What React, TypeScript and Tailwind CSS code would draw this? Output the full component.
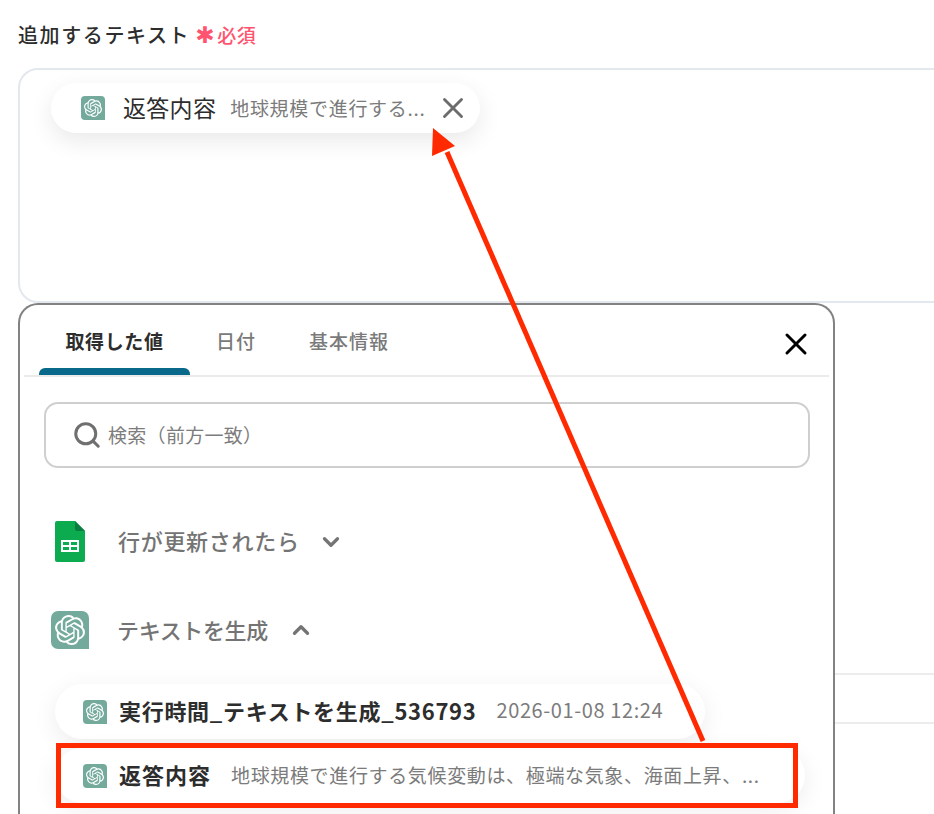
import { ChevronDown, ChevronUp, Search, X } from 'lucide-react';
import { SiOpenai } from 'react-icons/si';

const font = { fontFamily: '"Noto Sans CJK JP", "Noto Sans", sans-serif' };

function GptIcon({ size }: { size: 'sm' | 'lg' }) {
  return (
    <span
      className={
        size === 'lg'
          ? 'flex h-[38px] w-[38px] shrink-0 items-center justify-center rounded-[7px] rounded-br-none bg-[#74aa9c] text-white'
          : 'flex h-6 w-6 shrink-0 items-center justify-center rounded-[4px] rounded-br-none bg-[#74aa9c] text-white'
      }
    >
      <SiOpenai className={size === 'lg' ? 'h-[30px] w-[30px]' : 'h-[18px] w-[18px]'} />
    </span>
  );
}

function SheetsIcon() {
  return (
    <svg width="30" height="41" viewBox="0 0 30 41" className="shrink-0">
      <path d="M2 0h18l10 10v29a2 2 0 0 1-2 2H2a2 2 0 0 1-2-2V2a2 2 0 0 1 2-2z" fill="#0dab4f" />
      <path d="M20 0l10 10h-8a2 2 0 0 1-2-2z" fill="#0a7d41" />
      <path d="M6 19h18v12H6z" fill="#fff" />
      <path d="M8 21h6v3H8zM16 21h6v3h-6zM8 26h6v3H8zM16 26h6v3h-6z" fill="#0dab4f" />
    </svg>
  );
}

export default function App() {
  return (
    <div className="relative h-[814px] w-[934px] overflow-hidden bg-white text-[#2d2d2d]" style={font}>
      <div className="px-[18px] pt-[20px]">
        <div className="flex h-[30px] items-center">
          <span className="text-[20px] font-medium leading-[30px] tracking-[1.6px]">追加するテキスト</span>
          <span className="ml-[5px] flex items-center text-[19px] font-medium leading-[30px] tracking-[0.5px] text-[#ff5470]">
            <span className="mr-[5px] w-[17px] text-center font-['DejaVu_Sans'] text-[23px] leading-[30px]">✱</span>必須
          </span>
        </div>

        {/* text box */}
        <div className="mt-[18px] h-[235px] w-[1000px] rounded-[20px] border-2 border-[#e3e8ee] pl-[31px] pt-[13px]">
          <div className="flex h-[50px] w-[429px] items-center rounded-full bg-white pl-[30px] shadow-[0_8px_24px_rgba(0,0,0,0.09)]">
            <GptIcon size="sm" />
            <span className="ml-[18px] pb-[2px] text-[23px] leading-none tracking-[0.3px]">返答内容</span>
            <span className="ml-[14px] pb-[2px] text-[19px] leading-none tracking-[0.7px] text-[#7b7b7b]">地球規模で進行する...</span>
            <X className="ml-[11px] h-[34px] w-[34px] text-[#6c6c6c]" strokeWidth={2} />
          </div>
        </div>

        {/* popup */}
        <div className="relative z-10 h-[600px] w-[817px] rounded-t-[20px] border-2 border-b-0 border-[#828282] bg-white">
          <div className="mx-[4px] flex h-[72px] items-start border-b-2 border-[#ebebeb]">
            <div className="relative ml-[15px] flex h-[70px] w-[151px] justify-center pt-[21px] text-[19px] font-bold leading-[30px] tracking-[0.6px]">
              取得した値
              <div className="absolute bottom-0 left-0 h-[7px] w-full rounded-t-[6px] bg-[#08698a]" />
            </div>
            <div className="ml-[26px] pt-[21px] text-[19px] font-medium leading-[30px] tracking-[1px] text-[#7a7a7a]">日付</div>
            <div className="ml-[53px] pt-[21px] text-[19px] font-medium leading-[30px] tracking-[1px] text-[#7a7a7a]">基本情報</div>
            <X className="ml-auto mr-[15px] mt-[21px] h-[36px] w-[36px] text-black" strokeWidth={2} />
          </div>

          <div className="ml-[24px] mt-[25px] flex h-[66px] w-[766px] items-center rounded-[14px] border-2 border-[#cfcfcf] pl-[26px]">
            <Search className="h-[30px] w-[30px] text-[#6f6f6f]" strokeWidth={2.4} />
            <span className="ml-[6px] pt-px text-[19px] tracking-[0.3px] text-[#7d7d7d]">検索（前方一致）</span>
          </div>

          <div className="ml-[35px] mt-[53px] flex h-[41px] items-center">
            <SheetsIcon />
            <span className="ml-[33px] pb-[2px] text-[22px] font-medium tracking-[0.7px] text-[#747474]">行が更新されたら</span>
            <ChevronDown className="ml-[18px] h-[26px] w-[26px] text-[#747474]" strokeWidth={3} />
          </div>

          <div className="ml-[31px] mt-[49px] flex h-[38px] items-center">
            <GptIcon size="lg" />
            <span className="ml-[28px] pb-[2px] text-[22px] font-medium tracking-[-0.35px] text-[#747474]">テキストを生成</span>
            <ChevronUp className="ml-[20px] h-[26px] w-[26px] text-[#747474]" strokeWidth={3} />
          </div>

          <div className="ml-[35px] mt-[35px] flex h-[55px] w-[650px] items-center rounded-full bg-white pl-[28px] shadow-[0_6px_24px_rgba(0,0,0,0.08)]">
            <GptIcon size="sm" />
            <span className="ml-[12px] pb-[3px] text-[22px] font-bold leading-none tracking-[0.7px]">実行時間_テキストを生成_536793</span>
            <span className="ml-[20px] pb-[3px] text-[20px] leading-none tracking-[0.6px] text-[#7b7b7b]">2026-01-08 12:24</span>
          </div>

          <div className="ml-[35px] mt-[9px] flex h-[55px] w-[750px] items-center rounded-full bg-white pl-[28px] shadow-[0_6px_24px_rgba(0,0,0,0.08)]">
            <GptIcon size="sm" />
            <span className="ml-[12px] pb-[3px] text-[22px] font-bold leading-none tracking-[1px]">返答内容</span>
            <span className="ml-[20px] pb-[3px] text-[19px] leading-none tracking-[0.65px] text-[#7b7b7b]">地球規模で進行する気候変動は、極端な気象、海面上昇、...</span>
          </div>
        </div>
      </div>

      {/* background rows peeking out to the right of the popup */}
      <div className="absolute left-[835px] top-[673px] h-[51px] w-[99px] border-y-2 border-[#ececec]" />

      {/* annotation */}
      <div className="absolute left-[56px] top-[743px] z-20 h-[65px] w-[742px] border-[5px] border-[#ff2a00]" />
      <svg className="absolute left-0 top-0 z-20" width="934" height="814" viewBox="0 0 934 814">
        <path d="M703 741 L447 152" stroke="#ff2a00" strokeWidth="5" fill="none" />
        <path d="M433 128 L432 156 L455 146 Z" fill="#ff2a00" />
      </svg>
    </div>
  );
}
